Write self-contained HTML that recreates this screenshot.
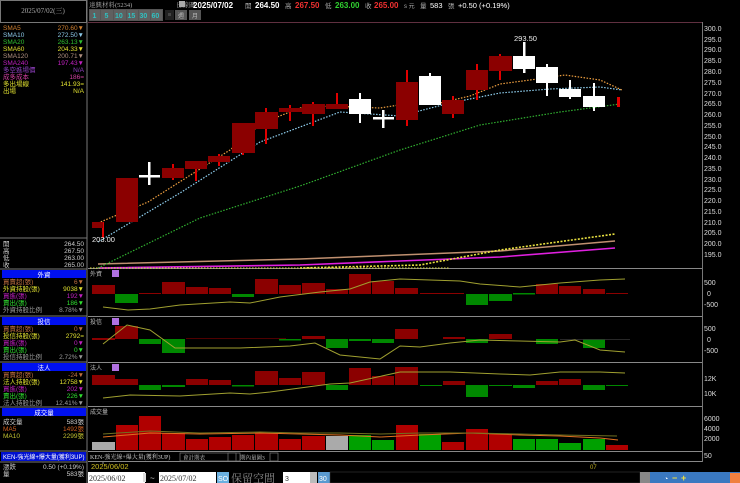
<!DOCTYPE html><html><head><meta charset="utf-8"><style>
html,body{margin:0;padding:0;background:#000;width:740px;height:483px;overflow:hidden}
svg{display:block}
text{font-family:"Liberation Sans","Noto Sans CJK TC",sans-serif}
.s{font-family:"Liberation Serif","Noto Serif CJK SC",serif}
</style></head><body>
<svg width="740" height="483" viewBox="0 0 740 483" xmlns="http://www.w3.org/2000/svg">
<rect width="740" height="483" fill="#000"/>
<!-- left panel -->
<rect x="0.5" y="0.5" width="86" height="22" fill="#000" stroke="#777"/>
<text x="43" y="13" fill="#aaa" font-size="7" text-anchor="middle" class="s">2025/07/02(三)</text>
<line x1="87" y1="0" x2="87" y2="483" stroke="#777"/>
<g font-size="6.5" class="s">
<text x="3" y="30" fill="#d08030">SMA5</text><text x="84" y="30" fill="#d08030" text-anchor="end">270.60▼</text>
<text x="3" y="37" fill="#8cc8e8">SMA10</text><text x="84" y="37" fill="#8cc8e8" text-anchor="end">272.50▼</text>
<text x="3" y="44" fill="#30c030">SMA20</text><text x="84" y="44" fill="#30c030" text-anchor="end">263.13▼</text>
<text x="3" y="51" fill="#e0e030">SMA60</text><text x="84" y="51" fill="#e0e030" text-anchor="end">204.33▼</text>
<text x="3" y="58" fill="#b09080">SMA120</text><text x="84" y="58" fill="#b09080" text-anchor="end">200.71▼</text>
<text x="3" y="65" fill="#c020c0">SMA240</text><text x="84" y="65" fill="#c020c0" text-anchor="end">197.43▼</text>
<text x="3" y="72" fill="#9040c0">多空進場價</text><text x="84" y="72" fill="#9040c0" text-anchor="end">N/A</text>
<text x="3" y="79" fill="#d040a0">成多成本</text><text x="84" y="79" fill="#d040a0" text-anchor="end">186=</text>
<text x="3" y="86" fill="#e0e030">多出場線</text><text x="84" y="86" fill="#e0e030" text-anchor="end">141.93=</text>
<text x="3" y="93" fill="#e0e030">出場</text><text x="84" y="93" fill="#e0e030" text-anchor="end">N/A</text>
</g>
<line x1="0" y1="238" x2="87" y2="238" stroke="#777"/>
<g font-size="6.5" class="s" fill="#ccc">
<text x="3" y="246">開</text><text x="84" y="246" text-anchor="end">264.50</text>
<text x="3" y="253">高</text><text x="84" y="253" text-anchor="end">267.50</text>
<text x="3" y="260">低</text><text x="84" y="260" text-anchor="end">263.00</text>
<text x="3" y="267">收</text><text x="84" y="267" text-anchor="end">265.00</text>
</g>
<!-- section headers -->
<g font-size="6.5" class="s">
<line x1="0" y1="269" x2="87" y2="269" stroke="#777"/>
<rect x="2" y="270" width="84" height="8" fill="#0010f0"/><text x="44" y="277" fill="#fff" text-anchor="middle">外資</text>
<text x="3" y="284" fill="#c07040">買賣超(張)</text><text x="84" y="284" fill="#c07040" text-anchor="end">6▼</text>
<text x="3" y="291" fill="#e0e030">外資持股(張)</text><text x="84" y="291" fill="#e0e030" text-anchor="end">9038▼</text>
<text x="3" y="298" fill="#c020c0">買進(張)</text><text x="84" y="298" fill="#c020c0" text-anchor="end">192▼</text>
<text x="3" y="305" fill="#30e030">賣出(張)</text><text x="84" y="305" fill="#30e030" text-anchor="end">186▼</text>
<text x="3" y="312" fill="#999">外資持股比例</text><text x="84" y="312" fill="#999" text-anchor="end">8.78%▼</text>
<line x1="0" y1="316" x2="87" y2="316" stroke="#777"/>
<rect x="2" y="317" width="84" height="8" fill="#0010f0"/><text x="44" y="324" fill="#fff" text-anchor="middle">投信</text>
<text x="3" y="331" fill="#c07040">買賣超(張)</text><text x="84" y="331" fill="#c07040" text-anchor="end">0▼</text>
<text x="3" y="338" fill="#e0e030">投信持股(張)</text><text x="84" y="338" fill="#e0e030" text-anchor="end">2792=</text>
<text x="3" y="345" fill="#c020c0">買進(張)</text><text x="84" y="345" fill="#c020c0" text-anchor="end">0▼</text>
<text x="3" y="352" fill="#30e030">賣出(張)</text><text x="84" y="352" fill="#30e030" text-anchor="end">0▼</text>
<text x="3" y="359" fill="#999">投信持股比例</text><text x="84" y="359" fill="#999" text-anchor="end">2.72%▼</text>
<line x1="0" y1="362" x2="87" y2="362" stroke="#777"/>
<rect x="2" y="363" width="84" height="8" fill="#0010f0"/><text x="44" y="370" fill="#fff" text-anchor="middle">法人</text>
<text x="3" y="377" fill="#c07040">買賣超(張)</text><text x="84" y="377" fill="#c07040" text-anchor="end">-24▼</text>
<text x="3" y="384" fill="#e0e030">法人持股(張)</text><text x="84" y="384" fill="#e0e030" text-anchor="end">12758▼</text>
<text x="3" y="391" fill="#c020c0">買進(張)</text><text x="84" y="391" fill="#c020c0" text-anchor="end">202▼</text>
<text x="3" y="398" fill="#30e030">賣出(張)</text><text x="84" y="398" fill="#30e030" text-anchor="end">226▼</text>
<text x="3" y="405" fill="#999">法人持股比例</text><text x="84" y="405" fill="#999" text-anchor="end">12.41%▼</text>
<line x1="0" y1="407" x2="87" y2="407" stroke="#777"/>
<rect x="2" y="408" width="84" height="8" fill="#0010f0"/><text x="44" y="415" fill="#fff" text-anchor="middle">成交量</text>
<text x="3" y="424" fill="#ccc">成交量</text><text x="84" y="424" fill="#ccc" text-anchor="end">583張</text>
<text x="3" y="431" fill="#d06020">MA5</text><text x="84" y="431" fill="#d06020" text-anchor="end">1492張</text>
<text x="3" y="438" fill="#c0c030">MA10</text><text x="84" y="438" fill="#c0c030" text-anchor="end">2299張</text>
<line x1="0" y1="451" x2="87" y2="451" stroke="#777"/>
<rect x="1" y="452" width="85" height="9" fill="#0010d0"/><text x="3" y="459" fill="#fff" font-size="6">KEN-強光線+爆大量(獲利3UP)</text>
<line x1="0" y1="462" x2="87" y2="462" stroke="#777"/>
<text x="3" y="469" fill="#ccc">漲跌</text><text x="84" y="469" fill="#ccc" text-anchor="end">0.50 (+0.19%)</text>
<text x="3" y="476" fill="#ccc">量</text><text x="84" y="476" fill="#ccc" text-anchor="end">583張</text>
</g>
<!-- header -->
<g font-size="7.5">
<text x="89" y="7" fill="#aaa" class="s" font-size="6.5">達興材料(5234)</text>
<text x="176" y="7" fill="#aaa" class="s" font-size="6.5">日線圖</text>
<rect x="179" y="1" width="6" height="6" fill="#aaa"/>
<text x="193" y="8" fill="#fff" font-weight="bold" font-size="8">2025/07/02</text>
<text x="245" y="8" fill="#aaa" font-size="6.5">開</text><text x="255" y="8" fill="#fff" font-weight="bold" font-size="8">264.50</text>
<text x="285" y="8" fill="#aaa" font-size="6.5">高</text><text x="295" y="8" fill="#f03030" font-weight="bold" font-size="8">267.50</text>
<text x="325" y="8" fill="#aaa" font-size="6.5">低</text><text x="335" y="8" fill="#30d030" font-weight="bold" font-size="8">263.00</text>
<text x="365" y="8" fill="#aaa" font-size="6.5">收</text><text x="374" y="8" fill="#f03030" font-weight="bold" font-size="8">265.00</text>
<text x="404" y="8" fill="#aaa" font-size="6">s 元</text>
<text x="420" y="8" fill="#aaa" font-size="6.5">量</text><text x="430" y="8" fill="#fff" font-size="7.5">583</text>
<text x="448" y="8" fill="#aaa" font-size="6.5">張</text>
<text x="458" y="8" fill="#fff" font-size="7.5">+0.50 (+0.19%)</text>
</g>
<!-- toolbar -->
<g font-size="7" fill="#30c0c0" font-weight="bold">
<rect x="89" y="9" width="74" height="12" fill="#555"/>
<rect x="90" y="10" width="10" height="10" fill="#606060"/><text x="92.5" y="18">1</text>
<rect x="101" y="10" width="12" height="10" fill="#606060"/><text x="104.5" y="18">5</text>
<rect x="114" y="10" width="12" height="10" fill="#606060"/><text x="115" y="18">10</text>
<rect x="127" y="10" width="11" height="10" fill="#606060"/><text x="127.5" y="18">15</text>
<rect x="139" y="10" width="11" height="10" fill="#606060"/><text x="139.5" y="18">30</text>
<rect x="151" y="10" width="11" height="10" fill="#606060"/><text x="151.5" y="18">60</text>
<rect x="165" y="10" width="9" height="10" fill="#222"/><rect x="168" y="13" width="3" height="3" fill="#444"/>
<rect x="175" y="10" width="12" height="10" fill="#555"/><text x="178" y="18" font-size="6" font-weight="normal" fill="#bbb">週</text>
<rect x="189" y="10" width="12" height="10" fill="#555"/><text x="192" y="18" font-size="6" font-weight="normal" fill="#bbb">月</text>
</g>
<!-- chart frames -->
<line x1="88" y1="22.5" x2="702" y2="22.5" stroke="#603040"/>
<line x1="702.5" y1="22" x2="702.5" y2="462" stroke="#777"/>
<line x1="88" y1="268.5" x2="702" y2="268.5" stroke="#888"/>
<line x1="88" y1="316.5" x2="702" y2="316.5" stroke="#888"/>
<line x1="88" y1="362.5" x2="702" y2="362.5" stroke="#888"/>
<line x1="88" y1="406.5" x2="702" y2="406.5" stroke="#888"/>
<line x1="88" y1="451.5" x2="702" y2="451.5" stroke="#888"/>
<line x1="88" y1="461.5" x2="702" y2="461.5" stroke="#888"/>
<!-- price axis -->
<g font-size="7" fill="#ddd">
<text x="704" y="31">300.0</text><text x="704" y="42">295.0</text><text x="704" y="52">290.0</text><text x="704" y="63">285.0</text><text x="704" y="74">280.0</text><text x="704" y="85">275.0</text><text x="704" y="96">270.0</text><text x="704" y="106">265.0</text><text x="704" y="117">260.0</text><text x="704" y="128">255.0</text><text x="704" y="139">250.0</text><text x="704" y="149">245.0</text><text x="704" y="160">240.0</text><text x="704" y="171">235.0</text><text x="704" y="182">230.0</text><text x="704" y="192">225.0</text><text x="704" y="203">220.0</text><text x="704" y="214">215.0</text><text x="704" y="225">210.0</text><text x="704" y="235">205.0</text><text x="704" y="246">200.0</text><text x="704" y="257">195.0</text>
<text x="704" y="285">500</text><text x="707" y="296">0</text><text x="704" y="307">-500</text>
<text x="704" y="331">500</text><text x="707" y="342">0</text><text x="704" y="353">-500</text>
<text x="704" y="381">12K</text><text x="704" y="396">10K</text>
<text x="704" y="421">6000</text><text x="704" y="431">4000</text><text x="704" y="441">2000</text><text x="704" y="458">50</text>
</g>
<!-- MAs long -->
<polyline points="98,264 300,259 500,251 615,241" fill="none" stroke="#c09070" stroke-width="1.5"/>
<polyline points="98,268 300,265 500,257 615,248" fill="none" stroke="#e020e0" stroke-width="1.6"/>
<polyline points="300,268 420,265 500,250 615,234" fill="none" stroke="#e8e040" stroke-width="1.6" stroke-dasharray="2 1.5"/>
<line x1="90" y1="268" x2="450" y2="268" stroke="#e0e040" stroke-width="1" stroke-dasharray="1.5 1.5"/>
<polyline points="98,268 200,218 300,186 400,150 480,125 560,112 620,104" fill="none" stroke="#30b030" stroke-width="1.2" stroke-dasharray="1.5 1.5"/>
<polyline points="98,242 180,193 260,142 340,112 400,116 450,103 500,93 550,89 600,87 622,90" fill="none" stroke="#90d0f0" stroke-width="1.2" stroke-dasharray="1.5 1.5"/>
<polyline points="98,223 148,202 230,150 262,123 300,108 330,106 380,108 405,104 440,103 470,96 500,84 530,80 565,75 600,80 622,90" fill="none" stroke="#f0a040" stroke-width="1.2" stroke-dasharray="1.5 1.5"/>
<!-- candles -->
<g fill="#8b0000">
<rect x="102" y="222" width="2" height="16" fill="#e00000"/><rect x="92" y="222" width="11" height="6"/>
<rect x="116" y="178" width="22" height="44"/>
<rect x="172" y="164" width="2" height="16" fill="#e00000"/><rect x="162" y="168" width="22" height="10"/>
<rect x="195" y="161" width="2" height="20" fill="#e00000"/><rect x="185" y="161" width="22" height="8"/>
<rect x="218" y="154" width="2" height="12" fill="#e00000"/><rect x="208" y="156" width="22" height="6"/>
<rect x="242" y="123" width="2" height="32" fill="#e00000"/><rect x="232" y="123" width="23" height="30"/>
<rect x="265" y="108" width="2" height="36" fill="#e00000"/><rect x="255" y="112" width="23" height="17"/>
<rect x="289" y="105" width="2" height="16" fill="#e00000"/><rect x="279" y="108" width="23" height="4"/>
<rect x="312" y="102" width="2" height="24" fill="#e00000"/><rect x="302" y="104" width="23" height="10"/>
<rect x="336" y="93" width="2" height="16" fill="#e00000"/><rect x="326" y="104" width="22" height="5"/>
<rect x="406" y="70" width="2" height="56" fill="#e00000"/><rect x="396" y="82" width="22" height="38"/>
<rect x="452" y="96" width="2" height="22" fill="#e00000"/><rect x="442" y="100" width="22" height="14"/>
<rect x="476" y="64" width="2" height="36" fill="#e00000"/><rect x="466" y="70" width="22" height="20"/>
<rect x="499" y="54" width="2" height="26" fill="#e00000"/><rect x="489" y="56" width="23" height="15"/>
<rect x="617" y="97" width="3" height="10" fill="#e00000"/>
</g>
<g fill="#fff">
<rect x="139" y="175" width="21" height="2.5"/><rect x="148" y="162" width="2.5" height="23"/>
<rect x="359" y="93" width="2" height="30"/><rect x="349" y="99" width="22" height="15"/>
<rect x="373" y="117" width="21" height="2.5"/><rect x="382" y="110" width="2.5" height="18"/>
<rect x="429" y="73" width="2" height="32"/><rect x="419" y="76" width="22" height="29"/>
<rect x="523" y="42" width="2.5" height="31"/><rect x="513" y="56" width="22" height="13"/>
<rect x="546" y="64" width="2" height="32"/><rect x="536" y="67" width="22" height="16"/>
<rect x="569" y="80" width="2" height="19"/><rect x="559" y="89" width="22" height="8"/>
<rect x="593" y="83" width="2" height="28"/><rect x="583" y="96" width="22" height="11"/>
</g>
<text x="514" y="41" fill="#eee" font-size="7.5">293.50</text>
<text x="92" y="242" fill="#eee" font-size="7.5">203.00</text>
<!-- sub panel labels -->
<g font-size="6" class="s" fill="#bbb">
<text x="90" y="276">外資</text><rect x="112" y="270" width="7" height="7" fill="#b070e0"/>
<text x="90" y="324">投信</text><rect x="112" y="318" width="7" height="7" fill="#b070e0"/>
<text x="90" y="370">法人</text><rect x="112" y="364" width="7" height="7" fill="#b070e0"/>
<text x="90" y="414">成交量</text>
</g>
<!-- 外資 -->
<g>
<rect x="92" y="285" width="23" height="9" fill="#8b0000"/><rect x="115" y="294" width="23" height="9" fill="#008800"/>
<rect x="139" y="293" width="22" height="1" fill="#8b0000"/>
<rect x="162" y="282" width="23" height="12" fill="#8b0000"/><rect x="186" y="287" width="22" height="7" fill="#8b0000"/>
<rect x="209" y="288" width="22" height="6" fill="#8b0000"/><rect x="232" y="294" width="22" height="3" fill="#008800"/>
<rect x="255" y="279" width="23" height="15" fill="#8b0000"/><rect x="279" y="285" width="22" height="9" fill="#8b0000"/>
<rect x="302" y="283" width="23" height="11" fill="#8b0000"/><rect x="326" y="289" width="22" height="5" fill="#8b0000"/>
<rect x="349" y="274" width="22" height="20" fill="#8b0000"/><rect x="372" y="281" width="22" height="13" fill="#8b0000"/>
<rect x="395" y="288" width="23" height="6" fill="#8b0000"/><rect x="420" y="293" width="44" height="1" fill="#8b0000"/>
<rect x="466" y="294" width="22" height="11" fill="#008800"/><rect x="489" y="294" width="23" height="7" fill="#008800"/>
<rect x="513" y="293" width="22" height="1.5" fill="#008800"/>
<rect x="536" y="284" width="22" height="10" fill="#8b0000"/><rect x="559" y="286" width="22" height="8" fill="#8b0000"/>
<rect x="583" y="289" width="22" height="5" fill="#8b0000"/><rect x="606" y="293" width="22" height="1" fill="#8b0000"/>
<polyline points="103,307 128,310 150,309 180,305 230,302 250,303 280,297 320,292 350,289 370,282 400,279 460,281 480,284 520,287 560,283 600,280 625,279" fill="none" stroke="#a0a030" stroke-width="1"/>
</g>
<!-- 投信 -->
<g>
<rect x="92" y="338" width="23" height="2" fill="#8b0000"/><rect x="115" y="326" width="23" height="13" fill="#8b0000"/>
<rect x="139" y="339" width="22" height="5" fill="#008800"/><rect x="162" y="339" width="23" height="14" fill="#008800"/>
<rect x="186" y="338" width="100" height="1" fill="#500000"/>
<rect x="279" y="339" width="22" height="1.5" fill="#008800"/><rect x="302" y="336" width="23" height="3" fill="#8b0000"/>
<rect x="326" y="339" width="22" height="9" fill="#008800"/><rect x="349" y="339" width="22" height="2" fill="#008800"/>
<rect x="372" y="339" width="22" height="4" fill="#008800"/><rect x="395" y="329" width="23" height="10" fill="#8b0000"/>
<rect x="443" y="337" width="22" height="2" fill="#8b0000"/><rect x="466" y="339" width="22" height="4" fill="#008800"/>
<rect x="489" y="334" width="23" height="5" fill="#8b0000"/><rect x="536" y="339" width="22" height="5" fill="#008800"/>
<rect x="583" y="339" width="22" height="9" fill="#008800"/><rect x="560" y="339" width="70" height="0.8" fill="#333"/>
<polyline points="103,344 127,325 150,330 175,348 240,348 290,346 315,343 340,355 380,359 400,346 420,347 450,343 480,340 520,341 560,342 575,340 600,350 625,352" fill="none" stroke="#a0a030" stroke-width="1"/>
</g>
<!-- 法人 -->
<g>
<rect x="92" y="375" width="23" height="10" fill="#8b0000"/><rect x="115" y="379" width="23" height="6" fill="#8b0000"/>
<rect x="139" y="385" width="22" height="5" fill="#008800"/><rect x="162" y="385" width="23" height="2" fill="#008800"/>
<rect x="186" y="379" width="22" height="6" fill="#8b0000"/><rect x="209" y="380" width="22" height="5" fill="#8b0000"/>
<rect x="232" y="385" width="22" height="1.5" fill="#008800"/><rect x="255" y="371" width="23" height="14" fill="#8b0000"/>
<rect x="279" y="378" width="22" height="7" fill="#8b0000"/><rect x="302" y="372" width="23" height="13" fill="#8b0000"/>
<rect x="326" y="385" width="22" height="5" fill="#008800"/><rect x="349" y="368" width="22" height="17" fill="#8b0000"/>
<rect x="372" y="376" width="22" height="9" fill="#8b0000"/><rect x="395" y="367" width="23" height="18" fill="#8b0000"/>
<rect x="420" y="385" width="22" height="1" fill="#008800"/><rect x="443" y="381" width="22" height="4" fill="#8b0000"/>
<rect x="466" y="385" width="22" height="12" fill="#008800"/><rect x="489" y="385" width="23" height="1" fill="#008800"/>
<rect x="513" y="385" width="22" height="3" fill="#008800"/><rect x="536" y="381" width="22" height="4" fill="#8b0000"/>
<rect x="559" y="379" width="22" height="6" fill="#8b0000"/><rect x="583" y="385" width="22" height="5" fill="#008800"/>
<rect x="606" y="385" width="22" height="1" fill="#008800"/>
<polyline points="103,398 130,395 180,396 230,393 250,394 270,392 300,388 330,384 350,383 400,372 450,372 500,374 530,375 560,372 600,372 625,373" fill="none" stroke="#a0a030" stroke-width="1"/>
</g>
<!-- volume -->
<g>
<rect x="92" y="442" width="23" height="8" fill="#aaa"/>
<rect x="116" y="425" width="22" height="25" fill="#b00000"/><rect x="139" y="416" width="22" height="34" fill="#b00000"/>
<rect x="162" y="433" width="23" height="17" fill="#b00000"/><rect x="186" y="439" width="22" height="11" fill="#b00000"/>
<rect x="209" y="437" width="22" height="13" fill="#b00000"/><rect x="232" y="435" width="22" height="15" fill="#b00000"/>
<rect x="255" y="433" width="23" height="17" fill="#b00000"/><rect x="279" y="439" width="22" height="11" fill="#b00000"/>
<rect x="302" y="436" width="23" height="14" fill="#b00000"/><rect x="326" y="436" width="22" height="14" fill="#aaa"/>
<rect x="349" y="435" width="22" height="15" fill="#00a000"/><rect x="372" y="440" width="22" height="10" fill="#00a000"/>
<rect x="396" y="425" width="22" height="25" fill="#b00000"/><rect x="419" y="434" width="22" height="16" fill="#00a000"/>
<rect x="442" y="442" width="22" height="8" fill="#b00000"/><rect x="466" y="429" width="22" height="21" fill="#b00000"/>
<rect x="489" y="434" width="23" height="16" fill="#b00000"/><rect x="513" y="439" width="22" height="11" fill="#00a000"/>
<rect x="536" y="439" width="22" height="11" fill="#00a000"/><rect x="559" y="443" width="22" height="7" fill="#00a000"/>
<rect x="583" y="439" width="22" height="11" fill="#00a000"/><rect x="606" y="445" width="22" height="5" fill="#b00000"/>
<polyline points="103,437 150,433 200,434 260,433 300,434 340,435 380,437 420,435 470,433 520,435 560,436 600,438 618,440" fill="none" stroke="#e07020" stroke-width="1"/>
<polyline points="103,434 150,431 200,433 260,432 300,433 340,433 380,434 420,433 470,433 520,434 560,435 617,436" fill="none" stroke="#707020" stroke-width="1"/>
</g>
<!-- strategy bar -->
<text x="90" y="459" fill="#ccc" font-size="6" class="s">KEN-強光線+爆大量(獲利3UP)</text>
<rect x="180" y="453" width="60" height="8" fill="#000" stroke="#777" stroke-width="0.7"/>
<text x="183" y="459.5" fill="#ccc" font-size="5.5" class="s">會計期表</text>
<rect x="228" y="453" width="8" height="8" fill="#000" stroke="#777" stroke-width="0.7"/>
<text x="240" y="459.5" fill="#ccc" font-size="5.5" class="s">期內量圖3</text>
<rect x="270" y="453" width="8" height="8" fill="#000" stroke="#777" stroke-width="0.7"/>
<text x="91" y="469" fill="#d0c020" font-size="7.5">2025/06/02</text>
<line x1="103" y1="461" x2="103" y2="464" stroke="#888"/>
<text x="590" y="469" fill="#c0b020" font-size="6">07</text>
<line x1="594" y1="461" x2="594" y2="464" stroke="#888"/>
<!-- bottom toolbar -->
<rect x="88" y="472" width="57" height="11" fill="#fff"/><text x="89" y="481" fill="#333" font-size="8" class="s">2025/06/02</text>
<rect x="143" y="473" width="3" height="9" fill="#ddd"/>
<text x="150" y="481" fill="#ccc" font-size="8">~</text>
<rect x="159" y="472" width="57" height="11" fill="#fff"/><text x="160" y="481" fill="#333" font-size="8" class="s">2025/07/02</text>
<rect x="217" y="472" width="12" height="11" fill="#6ab0e0"/><text x="218" y="481" fill="#fff" font-size="7">SO</text>
<text x="231" y="482" fill="#888" font-size="11" class="s">保留空間</text>
<rect x="283" y="472" width="27" height="11" fill="#fff"/><text x="285" y="481" fill="#333" font-size="7">3</text>
<rect x="310" y="472" width="7" height="11" fill="#bbb"/>
<rect x="318" y="472" width="12" height="11" fill="#5a9ad0"/><text x="319" y="481" fill="#fff" font-size="7">30</text>
<rect x="330" y="472" width="310" height="11" fill="#000" stroke="#444" stroke-width="0.5"/>
<rect x="640" y="472" width="10" height="11" fill="#888"/>
<rect x="650" y="472" width="90" height="11" fill="#3a78c0"/>
<g fill="#f0e040" font-size="9" font-weight="bold">
<text x="664" y="481" fill="#fff" font-size="7">◔</text>
<text x="672" y="481">−</text><text x="681" y="481">+</text>
</g>
<rect x="730" y="473" width="10" height="10" fill="#f08040"/>
</svg>
</body></html>
